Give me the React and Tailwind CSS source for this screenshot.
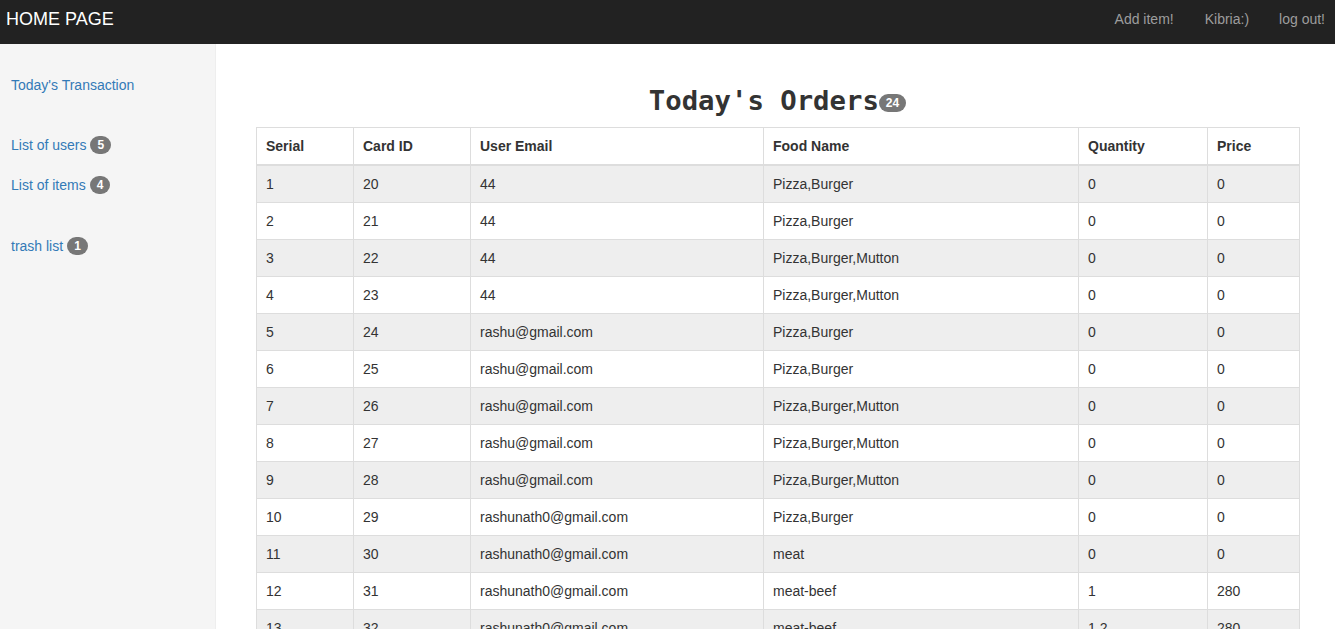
import React from "react";

const rows = [
  ["1", "20", "44", "Pizza,Burger", "0", "0"],
  ["2", "21", "44", "Pizza,Burger", "0", "0"],
  ["3", "22", "44", "Pizza,Burger,Mutton", "0", "0"],
  ["4", "23", "44", "Pizza,Burger,Mutton", "0", "0"],
  ["5", "24", "rashu@gmail.com", "Pizza,Burger", "0", "0"],
  ["6", "25", "rashu@gmail.com", "Pizza,Burger", "0", "0"],
  ["7", "26", "rashu@gmail.com", "Pizza,Burger,Mutton", "0", "0"],
  ["8", "27", "rashu@gmail.com", "Pizza,Burger,Mutton", "0", "0"],
  ["9", "28", "rashu@gmail.com", "Pizza,Burger,Mutton", "0", "0"],
  ["10", "29", "rashunath0@gmail.com", "Pizza,Burger", "0", "0"],
  ["11", "30", "rashunath0@gmail.com", "meat", "0", "0"],
  ["12", "31", "rashunath0@gmail.com", "meat-beef", "1", "280"],
  ["13", "32", "rashunath0@gmail.com", "meat-beef", "1,2", "280"],
  ["14", "33", "rashunath0@gmail.com", "meat-beef", "1", "280"],
];

const headers = ["Serial", "Card ID", "User Email", "Food Name", "Quantity", "Price"];
const widths = ["w-[97px]", "w-[117px]", "w-[293px]", "w-[315px]", "w-[129px]", "w-[92px]"];

function Badge({ children }) {
  return (
    <span className="inline-block min-w-[10px] px-[7px] py-[3px] text-[12px] font-bold leading-none text-white bg-[#777] rounded-[10px] text-center align-middle">
      {children}
    </span>
  );
}

export default function App() {
  return (
    <div className="min-h-[629px] flex flex-col text-[14px] leading-[20px] text-[#333]" style={{ fontFamily: '"Liberation Sans", Arial, sans-serif' }}>
      <nav className="h-[44px] bg-[#222] flex items-center justify-between shrink-0 pb-[6px]">
        <a className="pl-[6px] text-[18px] leading-[20px] text-white">HOME PAGE</a>
        <div className="flex items-center">
          <a className="text-[#9d9d9d] mr-[31px]">Add item!</a>
          <a className="text-[#9d9d9d] mr-[30px]">Kibria:)</a>
          <a className="text-[#9d9d9d] mr-[10px]">log out!</a>
        </div>
      </nav>
      <div className="flex flex-1">
        <aside className="w-[216px] shrink-0 bg-[#f5f5f5] border-r border-[#eee] pt-[31px] pl-[11px]">
          <div className="flex flex-col">
            <a className="text-[#337ab7] h-[20px]">Today's Transaction</a>
            <a className="text-[#337ab7] h-[20px] mt-[40px] flex items-center gap-[4px]">List of users <Badge>5</Badge></a>
            <a className="text-[#337ab7] h-[20px] mt-[20px] flex items-center gap-[4px]">List of items <Badge>4</Badge></a>
            <a className="text-[#337ab7] h-[20px] mt-[41px] flex items-center gap-[4px]">trash list <Badge>1</Badge></a>
          </div>
        </aside>
        <main className="flex-1 pl-[40px] pr-[35px] pt-[41px]">
          <div className="w-[1043px]">
            <h1 className="text-center text-[27.3px] leading-[32px] font-bold text-[#333] mb-[10px]" style={{ fontFamily: '"DejaVu Sans Mono", monospace' }}>
              Today's Orders<span className="inline-block px-[7px] py-[3px] text-[12px] font-bold leading-none text-white bg-[#777] rounded-[10px] align-middle" style={{ fontFamily: '"Liberation Sans", Arial, sans-serif' }}>24</span>
            </h1>
            <table className="w-[1043px] border-collapse border border-[#ddd] table-fixed">
              <thead>
                <tr>
                  {headers.map((h, i) => (
                    <th key={h} className={`${widths[i]} text-left font-bold px-[9px] py-[8px] border border-[#ddd] border-b-2`}>{h}</th>
                  ))}
                </tr>
              </thead>
              <tbody>
                {rows.map((r, ri) => (
                  <tr key={ri} className={ri % 2 === 0 ? "bg-[#eee]" : "bg-white"}>
                    {r.map((c, ci) => (
                      <td key={ci} className="px-[9px] py-[8px] border border-[#ddd]">{c}</td>
                    ))}
                  </tr>
                ))}
              </tbody>
            </table>
          </div>
        </main>
      </div>
    </div>
  );
}
